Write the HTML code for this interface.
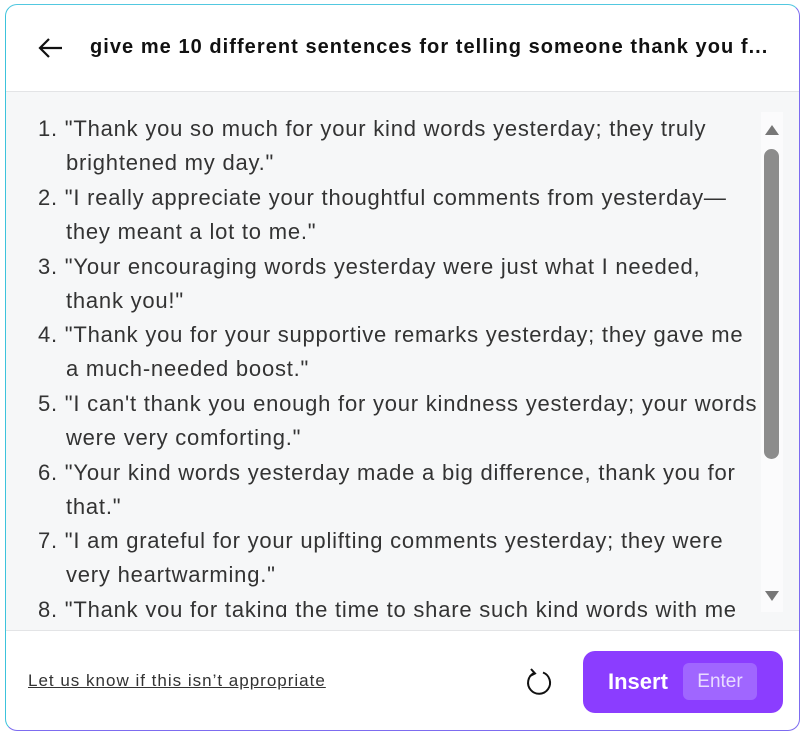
<!DOCTYPE html>
<html><head><style>
html,body{margin:0;padding:0;width:807px;height:736px;background:#fff;overflow:hidden;font-family:"Liberation Sans",sans-serif;}
.panel{position:absolute;left:5px;top:4px;width:795px;height:727px;border:1.5px solid #7d6cf0;border-left-color:#3cc3dc;border-top-color:#52c8e0;border-radius:12px;background:#fff;overflow:hidden;box-sizing:border-box;}
.hdr{position:absolute;left:0;top:0;right:0;height:86px;border-bottom:1px solid #e3e4e6;}
.hdr .t{position:absolute;left:84px;top:31px;font-weight:bold;font-size:20px;letter-spacing:1.05px;color:#111;white-space:nowrap;}
.content{position:absolute;left:0;top:87px;right:0;height:538px;background:#f6f7f8;border-bottom:1px solid #e3e4e6;}
.clip{position:absolute;left:0;top:18px;width:754px;height:507px;overflow:hidden;}
.line{position:absolute;font-size:22px;letter-spacing:0.78px;color:#333;white-space:nowrap;}
.sb{position:absolute;left:755px;top:20px;width:22px;height:500px;background:#fbfbfc;}
.thumb{position:absolute;left:3px;top:37px;width:15px;height:310px;background:#8c8c8c;border-radius:8px;}
.foot a{position:absolute;left:22px;top:666px;font-size:17px;letter-spacing:1px;color:#333;text-decoration:underline;}
.btn{position:absolute;left:577px;top:646px;width:200px;height:62px;background:#8b3dff;border-radius:12px;}
.btn .i{position:absolute;left:25px;top:18px;color:#fff;font-weight:bold;font-size:22px;}
.btn .e{position:absolute;left:100px;top:12px;width:74px;height:37px;background:#a066ff;border-radius:6px;color:#e9dcff;font-size:19px;text-align:center;line-height:37px;}
</style></head><body>
<div class="panel">
 <div class="hdr">
  <svg style="position:absolute;left:32px;top:32px" width="26" height="22" viewBox="0 0 26 22"><path d="M11 2 L2 11 L11 20 M2 11 H24" stroke="#111" stroke-width="2.2" fill="none"/></svg>
  <div class="t">give me 10 different sentences for telling someone thank you f...</div>
 </div>
 <div class="content">
  <div class="clip">
   <div class="line" style="left:32px;top:6px">1. "Thank you so much for your kind words yesterday; they truly</div>
   <div class="line" style="left:60px;top:40px">brightened my day."</div>
   <div class="line" style="left:32px;top:75px">2. "I really appreciate your thoughtful comments from yesterday—</div>
   <div class="line" style="left:60px;top:109px">they meant a lot to me."</div>
   <div class="line" style="left:32px;top:144px">3. "Your encouraging words yesterday were just what I needed,</div>
   <div class="line" style="left:60px;top:178px">thank you!"</div>
   <div class="line" style="left:32px;top:212px">4. "Thank you for your supportive remarks yesterday; they gave me</div>
   <div class="line" style="left:60px;top:246px">a much-needed boost."</div>
   <div class="line" style="left:32px;top:281px">5. "I can't thank you enough for your kindness yesterday; your words</div>
   <div class="line" style="left:60px;top:315px">were very comforting."</div>
   <div class="line" style="left:32px;top:350px">6. "Your kind words yesterday made a big difference, thank you for</div>
   <div class="line" style="left:60px;top:384px">that."</div>
   <div class="line" style="left:32px;top:418px">7. "I am grateful for your uplifting comments yesterday; they were</div>
   <div class="line" style="left:60px;top:452px">very heartwarming."</div>
   <div class="line" style="left:32px;top:487px">8. "Thank you for taking the time to share such kind words with me</div>
  </div>
  <div class="sb">
   <svg style="position:absolute;left:4px;top:13px" width="14" height="10"><path d="M7 0 L14 10 H0Z" fill="#777"/></svg>
   <div class="thumb"></div>
   <svg style="position:absolute;left:4px;top:479px" width="14" height="10"><path d="M0 0 H14 L7 10Z" fill="#777"/></svg>
  </div>
 </div>
 <div class="foot"><a>Let us know if this isn’t appropriate</a></div>
 <svg style="position:absolute;left:518px;top:662px" width="30" height="32" viewBox="0 0 30 32"><path d="M10 6 A11 11 0 1 0 19 5.5" stroke="#111" stroke-width="2" fill="none"/><path d="M7 2 L11 6.5 L6 9" stroke="#111" stroke-width="2" fill="none"/></svg>
 <div class="btn"><span class="i">Insert</span><span class="e">Enter</span></div>
</div>
</body></html>
